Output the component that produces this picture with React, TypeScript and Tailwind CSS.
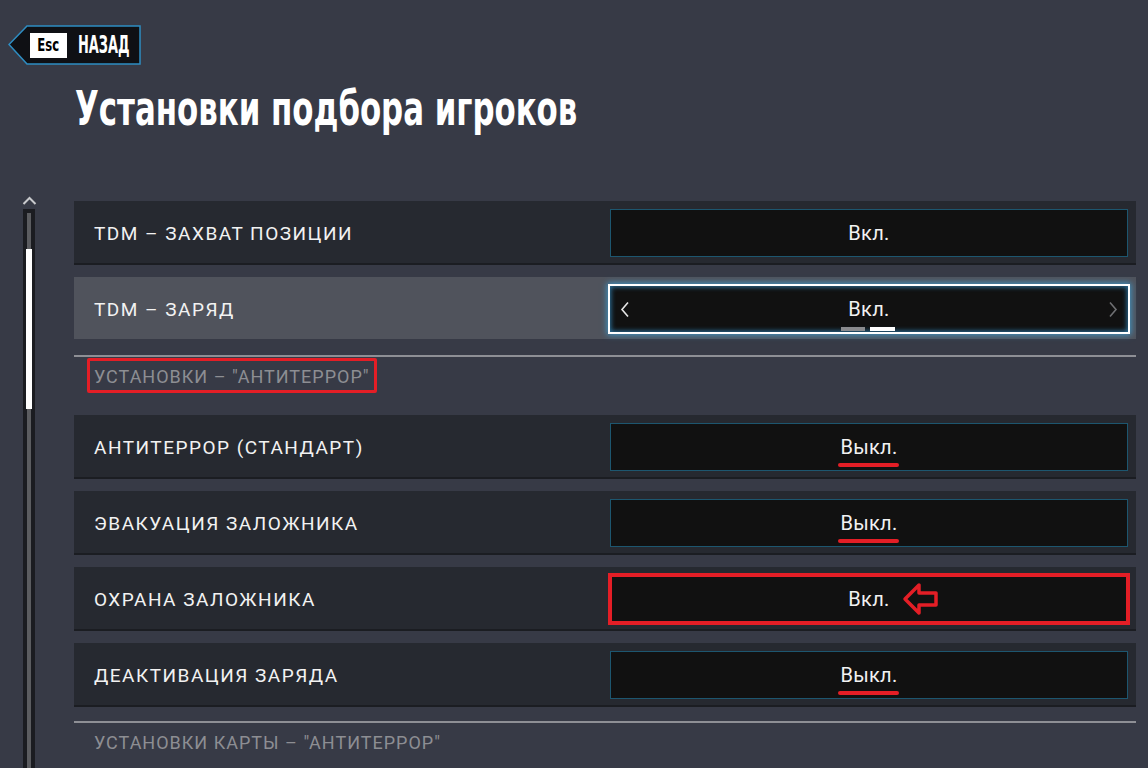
import type { ReactNode } from 'react'

const RED = 'bg-[#e41e26]'

interface RowProps {
  readonly label: string
  readonly value: string
  readonly selected?: boolean
  readonly mark?: 'underline' | 'box'
}

function BackButton() {
  return (
    <div className="relative h-[40px] w-[133px]">
      <svg className="absolute inset-0" width="133" height="40" viewBox="0 0 133 40">
        <polygon
          points="1,19.5 19,1 132,1 132,39 19,39"
          fill="#0f1014"
          stroke="#2e8dc2"
          strokeWidth="1.5"
        />
      </svg>
      <div className="relative flex h-full items-center pl-[22px]">
        <div className="flex h-[25px] w-[37px] shrink-0 items-center justify-center bg-white">
          <span className="inline-block scale-x-[0.72] font-['DejaVu_Sans',sans-serif] text-[18px] font-bold leading-none font-stretch-condensed text-black">
            Esc
          </span>
        </div>
        <span className="ml-[11px] inline-block shrink-0 origin-left scale-x-[0.6] font-['DejaVu_Sans',sans-serif] text-[24px] font-bold leading-none font-stretch-condensed text-white">
          НАЗАД
        </span>
      </div>
    </div>
  )
}

function Scrollbar() {
  return (
    <div className="flex h-full flex-col">
      <svg className="ml-[22px] mt-[6px]" width="15" height="9" viewBox="0 0 15 9">
        <polyline points="1.5,8 7.5,2 13.5,8" fill="none" stroke="#c9cacd" strokeWidth="2" />
      </svg>
      <div className="ml-[23px] mt-[4px] w-[12px] flex-1 bg-[#1b1c21] pt-[4px]">
        <div className="relative ml-[4px] h-full w-[4px] bg-[#5b5c60]">
          <div className="absolute left-[-1px] top-[36px] h-[160px] w-[6px] bg-white" />
        </div>
      </div>
    </div>
  )
}

function ValueText({ value, mark }: { readonly value: string; readonly mark?: RowProps['mark'] }) {
  return (
    <span className="relative text-[20px] leading-none tracking-[0.3px] text-[#f2f2f2]">
      {value}
      {mark === 'underline' && (
        <span className={`absolute left-[-2px] right-[-1px] top-full mt-[6px] h-[4px] rounded-full ${RED}`} />
      )}
      {mark === 'box' && (
        <svg className="absolute left-full top-1/2 ml-[12px] -translate-y-1/2" width="38" height="34" viewBox="0 0 38 34">
          <path
            d="M3 17 L17 3 L17 11 L34 11 L34 23 L17 23 L17 31 Z"
            fill="none"
            stroke="#e41e26"
            strokeWidth="3.5"
            strokeLinejoin="round"
          />
        </svg>
      )}
    </span>
  )
}

function SettingRow({ label, value, selected, mark }: RowProps) {
  return (
    <div
      className={`flex h-[64px] items-start justify-between border-b-2 ${
        selected ? 'border-transparent bg-[#50535c] bg-clip-padding' : 'border-[#1b1d22] bg-[#262930]'
      }`}
    >
      <span className="self-center pl-[20px] pt-[2px] text-[19px] leading-none tracking-[1.5px] text-[#f2f2f2]">
        {label}
      </span>
      {selected ? (
        <div className="relative mr-[6px] mt-[7px] flex h-[50px] w-[522px] items-center justify-between border-2 border-white bg-[#111111] px-[10px] shadow-[0_0_6px_1px_rgba(60,160,215,0.85),inset_0_0_5px_1px_rgba(50,140,195,0.8)]">
          <svg width="10" height="17" viewBox="0 0 10 17">
            <polyline points="8,1.5 2,8.5 8,15.5" fill="none" stroke="#e6e6e6" strokeWidth="1.6" />
          </svg>
          <ValueText value={value} />
          <svg width="10" height="17" viewBox="0 0 10 17">
            <polyline points="2,1.5 8,8.5 2,15.5" fill="none" stroke="#6f7073" strokeWidth="1.6" />
          </svg>
          <div className="absolute bottom-[1px] left-1/2 flex translate-x-[-28px] gap-[5px]">
            <div className="h-[4px] w-[24px] bg-[#8a8b8e]" />
            <div className="h-[4px] w-[25px] bg-white" />
          </div>
        </div>
      ) : (
        <div
          className={`mr-[8px] mt-[8px] flex h-[48px] w-[518px] items-center justify-center border border-[#1d566f] bg-[#111111] ${
            mark === 'box' ? 'outline-4 outline-[#e41e26] -outline-offset-2' : ''
          }`}
        >
          <ValueText value={value} mark={mark} />
        </div>
      )}
    </div>
  )
}

function SectionHeading({ children, boxed }: { readonly children: ReactNode; readonly boxed?: boolean }) {
  return (
    <div className="h-[58px] pl-[13px] pt-[1px]">
      <div
        className={`inline-flex h-[35px] items-center border-[3px] px-[4px] pt-[3px] ${
          boxed ? 'rounded-[2px] border-[#e41e26]' : 'border-transparent'
        }`}
      >
        <span className="text-[18px] leading-none tracking-[1px] text-[#8d8e93]">{children}</span>
      </div>
    </div>
  )
}

function Divider() {
  return <div className="mt-[14px] h-[2px] bg-[#8e8f95]" />
}

export default function App() {
  return (
    <div className="h-[768px] w-full overflow-hidden bg-[#373a46] font-['Roboto','Liberation_Sans',sans-serif]">
      <div className="pl-[8px] pt-[25px]">
        <BackButton />
      </div>
      <h1 className="ml-[75px] mt-[13px] h-[60px] leading-[60px]">
        <span className="inline-block origin-left scale-x-[0.714] font-['DejaVu_Sans',sans-serif] text-[48px] font-bold font-stretch-condensed text-white">
          Установки подбора игроков
        </span>
      </h1>
      <div className="mt-[52px] flex h-[578px]">
        <div className="w-[74px]">
          <Scrollbar />
        </div>
        <div className="w-[1062px] pt-[11px]">
          <div className="flex flex-col gap-[12px]">
            <SettingRow label="TDM – ЗАХВАТ ПОЗИЦИИ" value="Вкл." />
            <SettingRow label="TDM – ЗАРЯД" value="Вкл." selected />
          </div>
          <Divider />
          <SectionHeading boxed>УСТАНОВКИ – "АНТИТЕРРОР"</SectionHeading>
          <div className="flex flex-col gap-[12px]">
            <SettingRow label="АНТИТЕРРОР (СТАНДАРТ)" value="Выкл." mark="underline" />
            <SettingRow label="ЭВАКУАЦИЯ ЗАЛОЖНИКА" value="Выкл." mark="underline" />
            <SettingRow label="ОХРАНА ЗАЛОЖНИКА" value="Вкл." mark="box" />
            <SettingRow label="ДЕАКТИВАЦИЯ ЗАРЯДА" value="Выкл." mark="underline" />
          </div>
          <Divider />
          <SectionHeading>УСТАНОВКИ КАРТЫ – "АНТИТЕРРОР"</SectionHeading>
        </div>
      </div>
    </div>
  )
}
